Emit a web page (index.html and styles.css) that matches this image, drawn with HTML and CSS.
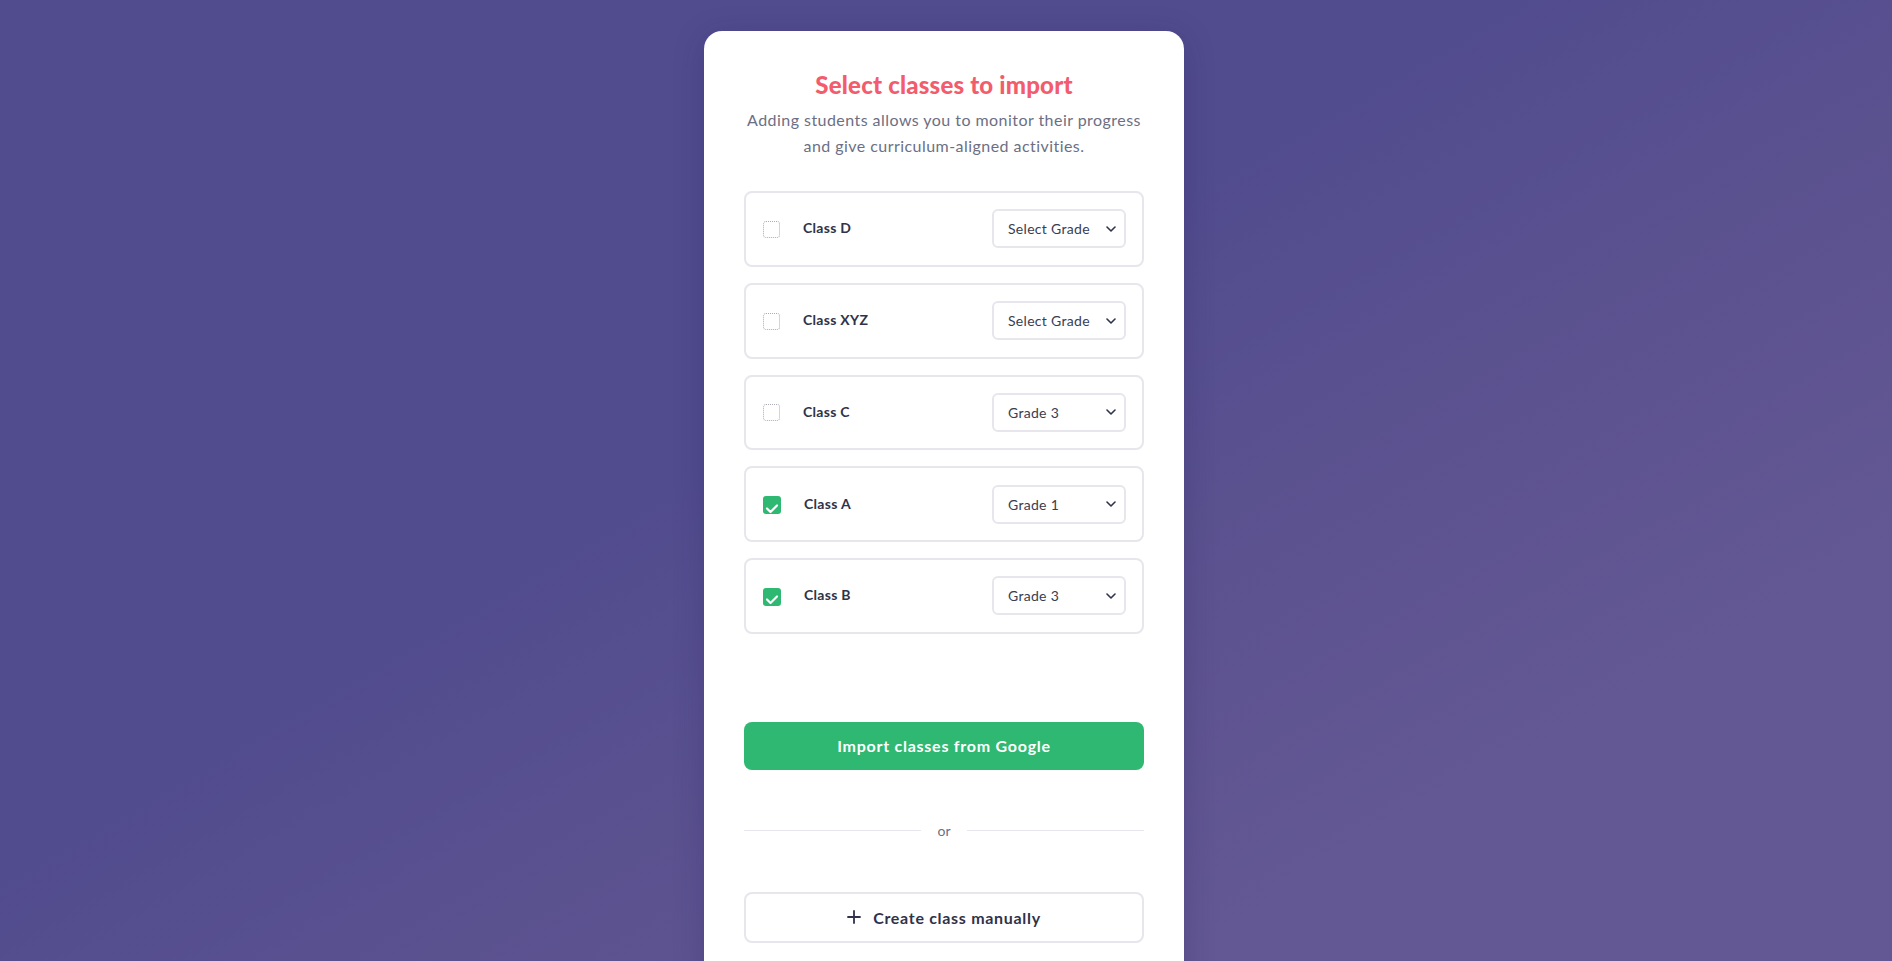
FILE: index.html
```html
<!DOCTYPE html>
<html lang="en">
<head>
<meta charset="utf-8">
<title>Select classes to import</title>
<link rel="stylesheet" href="styles.css">
</head>
<body>
<div class="page">
  <div class="card">
    <h1 class="title">Select classes to import</h1>
    <p class="subtitle">Adding students allows you to monitor their progress<br>and give curriculum-aligned activities.</p>

    <div class="rows">
      <div class="row">
        <span class="check"></span>
        <span class="label">Class D</span>
        <div class="select"><span>Select Grade</span><svg class="chev" width="10" height="6" viewBox="0 0 10 6"><path d="M1 1l4 4 4-4" fill="none" stroke="#2f3249" stroke-width="1.6" stroke-linecap="round" stroke-linejoin="round"/></svg></div>
      </div>
      <div class="row">
        <span class="check"></span>
        <span class="label">Class XYZ</span>
        <div class="select"><span>Select Grade</span><svg class="chev" width="10" height="6" viewBox="0 0 10 6"><path d="M1 1l4 4 4-4" fill="none" stroke="#2f3249" stroke-width="1.6" stroke-linecap="round" stroke-linejoin="round"/></svg></div>
      </div>
      <div class="row">
        <span class="check"></span>
        <span class="label">Class C</span>
        <div class="select"><span>Grade 3</span><svg class="chev" width="10" height="6" viewBox="0 0 10 6"><path d="M1 1l4 4 4-4" fill="none" stroke="#2f3249" stroke-width="1.6" stroke-linecap="round" stroke-linejoin="round"/></svg></div>
      </div>
      <div class="row">
        <span class="check checked"><svg width="14" height="11" viewBox="0 0 14 11"><path d="M2 5.5l3.5 3.5 6.5-6.5" fill="none" stroke="#fff" stroke-width="2.2" stroke-linecap="round" stroke-linejoin="round"/></svg></span>
        <span class="label">Class A</span>
        <div class="select"><span>Grade 1</span><svg class="chev" width="10" height="6" viewBox="0 0 10 6"><path d="M1 1l4 4 4-4" fill="none" stroke="#2f3249" stroke-width="1.6" stroke-linecap="round" stroke-linejoin="round"/></svg></div>
      </div>
      <div class="row">
        <span class="check checked"><svg width="14" height="11" viewBox="0 0 14 11"><path d="M2 5.5l3.5 3.5 6.5-6.5" fill="none" stroke="#fff" stroke-width="2.2" stroke-linecap="round" stroke-linejoin="round"/></svg></span>
        <span class="label">Class B</span>
        <div class="select"><span>Grade 3</span><svg class="chev" width="10" height="6" viewBox="0 0 10 6"><path d="M1 1l4 4 4-4" fill="none" stroke="#2f3249" stroke-width="1.6" stroke-linecap="round" stroke-linejoin="round"/></svg></div>
      </div>
    </div>

    <button class="btn-primary">Import classes from Google</button>

    <div class="divider"><span class="line"></span><span class="or">or</span><span class="line"></span></div>

    <button class="btn-outline"><svg width="14" height="14" viewBox="0 0 14 14"><path d="M7 1v12M1 7h12" stroke="#2f3249" stroke-width="1.8" stroke-linecap="round"/></svg><span>Create class manually</span></button>
  </div>
</div>
</body>
</html>
```
FILE: styles.css
```css
* { box-sizing: border-box; }
html, body { margin: 0; padding: 0; height: 100%; }
body {
  font-family: "Lato", "Open Sans", "Liberation Sans", sans-serif;
  background: linear-gradient(150deg, #514c8e 0%, #514c8e 42%, #5c5290 62%, #635893 80%, #635893 100%);
  overflow: hidden;
}
.page {
  display: flex;
  justify-content: center;
  padding-top: 31px;
  padding-right: 4px;
  height: 100vh;
}
.card {
  width: 480px;
  min-height: 1000px;
  background: #fff;
  border-radius: 18px;
  padding: 39px 40px 40px;
  box-shadow: 0 6px 30px rgba(40, 30, 90, 0.25);
  display: flex;
  flex-direction: column;
}
.title {
  margin: 0;
  font-size: 24px;
  line-height: 30px;
  font-weight: 900;
  color: #f25c6c;
  text-align: center;
  letter-spacing: 0.2px;
}
.subtitle {
  margin: 7px 0 0;
  font-size: 16px;
  line-height: 26px;
  color: #6c6f84;
  text-align: center;
  letter-spacing: 0.45px;
}
.rows {
  margin-top: 32px;
  display: flex;
  flex-direction: column;
  gap: 16px;
}
.row {
  height: 75.75px;
  border: 2px solid #e6e6ec;
  border-radius: 8px;
  display: flex;
  align-items: center;
  padding: 0 16px 0 17px;
}
.check {
  width: 17px;
  height: 17px;
  border: 1px dotted #a9abb8;
  border-radius: 3px;
  flex: none;
  display: flex;
  align-items: center;
  justify-content: center;
  margin-top: 1px;
}
.check.checked {
  width: 18px;
  height: 18px;
  border: none;
  background: #2eb872;
  border-radius: 3px;
  padding-top: 6px;
  margin-top: 2px;
}
.label {
  margin-left: 23px;
  font-size: 14px;
  font-weight: 700;
  color: #2f3249;
  flex: 1;
  margin-top: -2px;
  letter-spacing: 0.3px;
}
.select {
  width: 134px;
  height: 39px;
  border: 2px solid #e6e6ec;
  border-radius: 6px;
  display: flex;
  align-items: center;
  justify-content: space-between;
  padding: 0 8px 0 14px;
  font-size: 14px;
  color: #3a3d52;
  letter-spacing: 0.3px;
}
.chev { flex: none; }
.btn-primary {
  margin-top: 88px;
  height: 48px;
  width: 100%;
  border: none;
  border-radius: 8px;
  background: #2eb872;
  color: #fff;
  font-family: inherit;
  font-size: 16px;
  font-weight: 700;
  letter-spacing: 0.75px;
}
.divider {
  margin-top: 37px;
  display: flex;
  align-items: center;
  gap: 16px;
  height: 48px;
}
.line {
  flex: 1;
  height: 1px;
  background: #e6e6ec;
}
.or {
  font-size: 14px;
  color: #6c6f84;
  line-height: 16px;
}
.btn-outline {
  margin-top: 37px;
  height: 51px;
  width: 100%;
  border: 2px solid #e6e6ec;
  border-radius: 8px;
  background: #fff;
  color: #2f3249;
  font-family: inherit;
  font-size: 16px;
  font-weight: 700;
  letter-spacing: 0.7px;
  display: flex;
  align-items: center;
  justify-content: center;
  gap: 12px;
}
```
